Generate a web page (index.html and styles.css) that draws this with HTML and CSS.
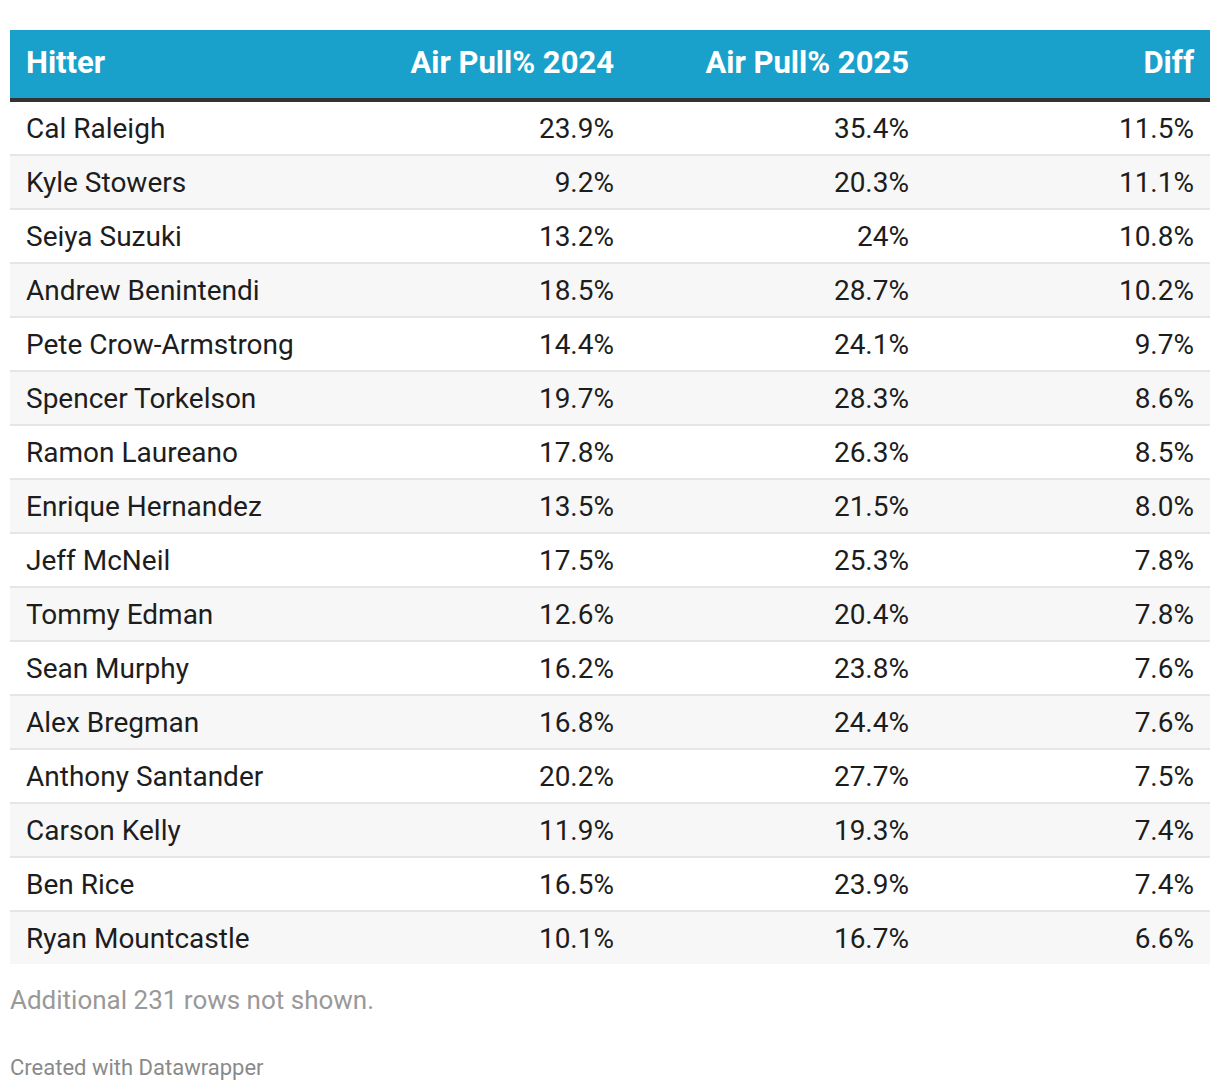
FILE: index.html
```html
<!DOCTYPE html>
<html>
<head>
<meta charset="utf-8">
<link rel="stylesheet" href="styles.css">
</head>
<body>
<div class="chart">
  <table class="dw-table">
    <thead>
      <tr>
        <th class="name">Hitter</th>
        <th class="num c2">Air Pull% 2024</th>
        <th class="num c3">Air Pull% 2025</th>
        <th class="num c4">Diff</th>
      </tr>
    </thead>
    <tbody>
      <tr><td class="name">Cal Raleigh</td><td class="num">23.9%</td><td class="num">35.4%</td><td class="num">11.5%</td></tr>
      <tr><td class="name">Kyle Stowers</td><td class="num">9.2%</td><td class="num">20.3%</td><td class="num">11.1%</td></tr>
      <tr><td class="name">Seiya Suzuki</td><td class="num">13.2%</td><td class="num">24%</td><td class="num">10.8%</td></tr>
      <tr><td class="name">Andrew Benintendi</td><td class="num">18.5%</td><td class="num">28.7%</td><td class="num">10.2%</td></tr>
      <tr><td class="name">Pete Crow-Armstrong</td><td class="num">14.4%</td><td class="num">24.1%</td><td class="num">9.7%</td></tr>
      <tr><td class="name">Spencer Torkelson</td><td class="num">19.7%</td><td class="num">28.3%</td><td class="num">8.6%</td></tr>
      <tr><td class="name">Ramon Laureano</td><td class="num">17.8%</td><td class="num">26.3%</td><td class="num">8.5%</td></tr>
      <tr><td class="name">Enrique Hernandez</td><td class="num">13.5%</td><td class="num">21.5%</td><td class="num">8.0%</td></tr>
      <tr><td class="name">Jeff McNeil</td><td class="num">17.5%</td><td class="num">25.3%</td><td class="num">7.8%</td></tr>
      <tr><td class="name">Tommy Edman</td><td class="num">12.6%</td><td class="num">20.4%</td><td class="num">7.8%</td></tr>
      <tr><td class="name">Sean Murphy</td><td class="num">16.2%</td><td class="num">23.8%</td><td class="num">7.6%</td></tr>
      <tr><td class="name">Alex Bregman</td><td class="num">16.8%</td><td class="num">24.4%</td><td class="num">7.6%</td></tr>
      <tr><td class="name">Anthony Santander</td><td class="num">20.2%</td><td class="num">27.7%</td><td class="num">7.5%</td></tr>
      <tr><td class="name">Carson Kelly</td><td class="num">11.9%</td><td class="num">19.3%</td><td class="num">7.4%</td></tr>
      <tr><td class="name">Ben Rice</td><td class="num">16.5%</td><td class="num">23.9%</td><td class="num">7.4%</td></tr>
      <tr><td class="name">Ryan Mountcastle</td><td class="num">10.1%</td><td class="num">16.7%</td><td class="num">6.6%</td></tr>
    </tbody>
  </table>
  <p class="notes">Additional 231 rows not shown.</p>
  <p class="credit">Created with Datawrapper</p>
</div>
</body>
</html>
```

FILE: styles.css
```css
html, body {
  margin: 0;
  padding: 0;
  background: #ffffff;
}

.chart {
  padding: 30px 10px 0 10px;
  font-family: Roboto, "Liberation Sans", sans-serif;
  color: #1d1d1d;
}

.dw-table {
  width: 1200px;
  border-collapse: collapse;
  table-layout: fixed;
}

.dw-table th {
  background: #19a1cc;
  color: #ffffff;
  font-weight: 700;
  font-size: 31px;
  height: 65px;
  padding: 0 16px 3px 16px;
  border-bottom: 4px solid #333333;
  box-sizing: content-box;
  vertical-align: middle;
}

.dw-table th.name { text-align: left; }
.dw-table th.num { text-align: right; }

.dw-table th.name { width: 293px; }
.dw-table th.c2 { width: 263px; }
.dw-table th.c3 { width: 263px; }
.dw-table th.c4 { width: 253px; }

.dw-table td {
  font-size: 28px;
  height: 52px;
  padding: 0 16px 0 16px;
  border-bottom: 2px solid #e6e6e6;
  vertical-align: middle;
}

.dw-table td.name { text-align: left; }
.dw-table td.num { text-align: right; }

.dw-table tbody tr:nth-child(even) td { background: #f7f7f7; }
.dw-table tbody tr:last-child td { border-bottom: none; }

.notes {
  margin: 20px 0 0 0;
  font-size: 26px;
  line-height: 32px;
  color: #999999;
}

.credit {
  margin: 38px 0 0 0;
  font-size: 22px;
  line-height: 28px;
  color: #8a8a8a;
}
```
